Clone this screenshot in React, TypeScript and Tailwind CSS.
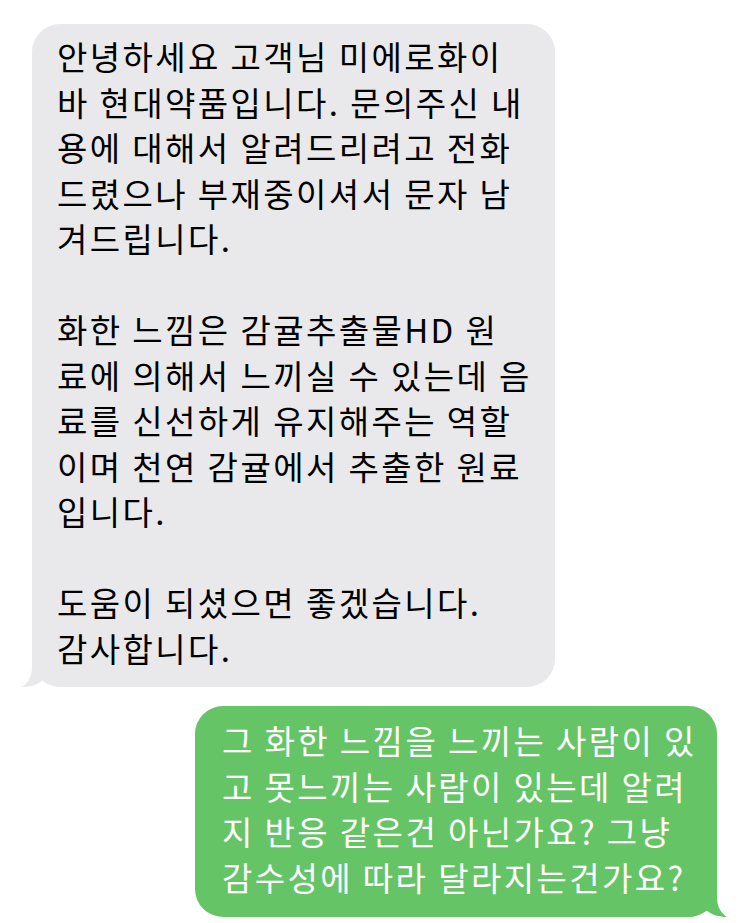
import React from 'react'

const grayLines = [
  '안녕하세요 고객님 미에로화이',
  '바 현대약품입니다. 문의주신 내',
  '용에 대해서 알려드리려고 전화',
  '드렸으나 부재중이셔서 문자 남',
  '겨드립니다.',
  '',
  '화한 느낌은 감귤추출물HD 원',
  '료에 의해서 느끼실 수 있는데 음',
  '료를 신선하게 유지해주는 역할',
  '이며 천연 감귤에서 추출한 원료',
  '입니다.',
  '',
  '도움이 되셨으면 좋겠습니다.',
  '감사합니다.',
]

const greenLines = [
  '그 화한 느낌을 느끼는 사람이 있',
  '고 못느끼는 사람이 있는데 알려',
  '지 반응 같은건 아닌가요? 그냥',
  '감수성에 따라 달라지는건가요?',
]

function Tail({ color, className }: { color: string; className: string }) {
  return (
    <svg width="40" height="30" viewBox="0 0 40 30" className={className}>
      <path
        d="M10,0 L40,0 L40,30 L38,30 C32,30 26,27 21,23 C15,28 8,30 0,30 C6,26 10,20 10,10 Z"
        fill={color}
      />
    </svg>
  )
}

function Lines({ lines }: { lines: string[] }) {
  return (
    <>
      {lines.map((l, i) => (
        <div key={i} className="whitespace-nowrap h-[45.5px]">
          {l}
        </div>
      ))}
    </>
  )
}

export default function App() {
  return (
    <div
      className="w-[750px] h-[923px] bg-white overflow-hidden flex flex-col text-[33px] leading-[45.5px] tracking-[2.4px]"
      style={{ fontFamily: '"Noto Sans CJK KR", "Noto Sans", sans-serif' }}
    >
      {/* incoming */}
      <div className="relative ml-[32px] mt-[24px] w-[523px] bg-[#e9e9eb] rounded-[28px] pl-[25px] pt-[10px] pb-[16px] text-black">
        <Lines lines={grayLines} />
        <Tail color="#e9e9eb" className="absolute left-[-10px] bottom-0" />
      </div>

      {/* outgoing */}
      <div className="relative self-end mr-[33px] mt-[19px] w-[522px] bg-[#65c466] rounded-[28px] pl-[27px] pt-[12px] pb-[17px] text-white">
        <Lines lines={greenLines} />
        <Tail color="#65c466" className="absolute right-[-10px] bottom-0 -scale-x-100" />
      </div>
    </div>
  )
}
